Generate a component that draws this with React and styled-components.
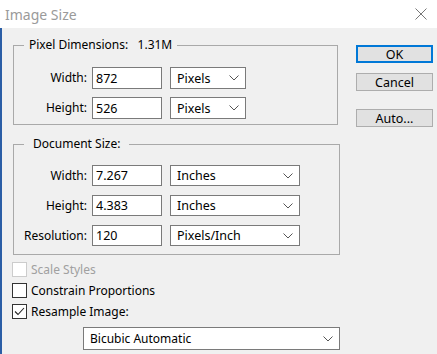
import React from 'react'
import styled, { createGlobalStyle } from 'styled-components'

const GlobalStyle = createGlobalStyle`
    html, body {
        margin: 0;
        padding: 0;
        background: #f0f0f0;
    }
    body {
        font-family: "Noto Sans", "Open Sans", sans-serif;
        font-size: 12px;
        color: #000;
    }
`;

const Window = styled.div`
    width: 437px;
    height: 354px;
    display: flex;
    flex-direction: column;
    background: #f0f0f0;
    overflow: hidden;
`;

const TitleBar = styled.div`
    height: 28px;
    flex: none;
    background: #fff;
    display: flex;
    align-items: center;
    justify-content: space-between;
    padding: 0 8px 0 5px;
`;

const Title = styled.span`
    font-size: 14px;
    color: #9a9a9a;
`;

const Close = styled.svg`
    width: 12px;
    height: 12px;
    margin-right: 2px;
`;

const Body = styled.div`
    flex: 1;
    display: flex;
    border-left: 2px solid #2b5ea6;
    padding-left: 11px;
`;

const Main = styled.div`
    width: 327px;
    display: flex;
    flex-direction: column;
`;

const Group = styled.fieldset`
    box-sizing: border-box;
    width: ${p => p.$width}px;
    margin: ${p => p.$top}px 0 0 0;
    padding: ${p => p.$padTop}px 0 ${p => p.$padBottom}px 0;
    border: 1px solid #a9a9a9;
    display: flex;
    flex-direction: column;
    gap: ${p => p.$gap}px;
`;

const Legend = styled.legend`
    margin-left: 10px;
    padding: 0 ${p => p.$pad}px;
    line-height: 16px;
    white-space: pre;
`;

const Row = styled.div`
    display: flex;
    align-items: center;
    height: ${p => p.$h}px;
`;

const Label = styled.label`
    width: 73px;
    text-align: right;
    margin-right: 5px;
    line-height: 16px;
`;

const Input = styled.div`
    box-sizing: border-box;
    width: 70px;
    height: 100%;
    background: #fff;
    border: 1px solid #7a7a7a;
    padding-left: 3px;
    display: flex;
    align-items: center;
    font-size: 12.5px;
`;

const Select = styled.div`
    box-sizing: border-box;
    width: ${p => p.$width}px;
    height: 100%;
    margin-left: ${p => p.$ml || 0}px;
    background: #fff;
    border: 1px solid #7a7a7a;
    padding: 0 6px 0 6px;
    display: flex;
    align-items: center;
    justify-content: space-between;
    font-size: ${p => p.$fs || 12.5}px;
`;

const Chevron = () => (
    <svg width="10" height="6" viewBox="0 0 10 6">
        <path d="M0.5 0.5 L5 5 L9.5 0.5" fill="none" stroke="#555" strokeWidth="1" />
    </svg>
);

const Checks = styled.div`
    display: flex;
    flex-direction: column;
    margin-top: 4px;
    margin-left: -1px;
`;

const CheckRow = styled.div`
    display: flex;
    align-items: center;
    height: 21px;
    color: ${p => (p.$disabled ? '#a0a0a0' : '#000')};
`;

const Box = styled.span`
    box-sizing: border-box;
    width: 15px;
    height: 15px;
    margin-right: 4px;
    background: #fff;
    border: 1px solid ${p => (p.$disabled ? '#cccccc' : '#333')};
    display: flex;
    align-items: center;
    justify-content: center;
`;

const Resample = styled.div`
    margin: 5px 0 0 70px;
    height: 23px;
    display: flex;
`;

const Side = styled.div`
    display: flex;
    flex-direction: column;
    margin-left: 16px;
    padding-top: 17px;
`;

const Button = styled.div`
    box-sizing: border-box;
    width: 77px;
    height: 18px;
    margin-top: ${p => p.$mt}px;
    background: #e1e1e1;
    border: ${p => (p.$primary ? '2px solid #0078d7' : '1px solid #adadad')};
    display: flex;
    align-items: center;
    justify-content: center;
    font-size: 12.5px;
`;

const Field = ({ label, value, unit, unitWidth, h }) => (
    <Row $h={h}>
        <Label>{label}</Label>
        <Input>{value}</Input>
        <Select $width={unitWidth} $ml={8}>
            {unit}
            <Chevron />
        </Select>
    </Row>
);

const Check = ({ label, checked, disabled }) => (
    <CheckRow $disabled={disabled}>
        <Box $disabled={disabled}>
            {checked && (
                <svg width="11" height="9" viewBox="0 0 11 9">
                    <path d="M1 4.5 L4 7.5 L10 1" fill="none" stroke="#222" strokeWidth="1.1" />
                </svg>
            )}
        </Box>
        {label}
    </CheckRow>
);

const App = () => {
    return (
        <Window>
            <GlobalStyle />
            <TitleBar>
                <Title>Image Size</Title>
                <Close viewBox="0 0 12 12">
                    <path d="M0.5 0.5 L11.5 11.5 M11.5 0.5 L0.5 11.5" stroke="#777" strokeWidth="1" />
                </Close>
            </TitleBar>
            <Body>
                <Main>
                    <Group $width={325} $top={9} $padTop={14} $padBottom={5} $gap={8}>
                        <Legend $pad={5}>Pixel Dimensions:   1.31M</Legend>
                        <Field label="Width:" value="872" unit="Pixels" unitWidth={76} h={22} />
                        <Field label="Height:" value="526" unit="Pixels" unitWidth={76} h={22} />
                    </Group>
                    <Group $width={327} $top={11} $padTop={13} $padBottom={8} $gap={9}>
                        <Legend $pad={9}>Document Size:</Legend>
                        <Field label="Width:" value="7.267" unit="Inches" unitWidth={130} h={21} />
                        <Field label="Height:" value="4.383" unit="Inches" unitWidth={130} h={21} />
                        <Field label="Resolution:" value="120" unit="Pixels/Inch" unitWidth={130} h={21} />
                    </Group>
                    <Checks>
                        <Check label="Scale Styles" disabled />
                        <Check label="Constrain Proportions" />
                        <Check label="Resample Image:" checked />
                    </Checks>
                    <Resample>
                        <Select $width={257} $fs={12}>
                            Bicubic Automatic
                            <Chevron />
                        </Select>
                    </Resample>
                </Main>
                <Side>
                    <Button $primary $mt={0}>OK</Button>
                    <Button $mt={10}>Cancel</Button>
                    <Button $mt={18}>Auto...</Button>
                </Side>
            </Body>
        </Window>
    )
}

export default App
